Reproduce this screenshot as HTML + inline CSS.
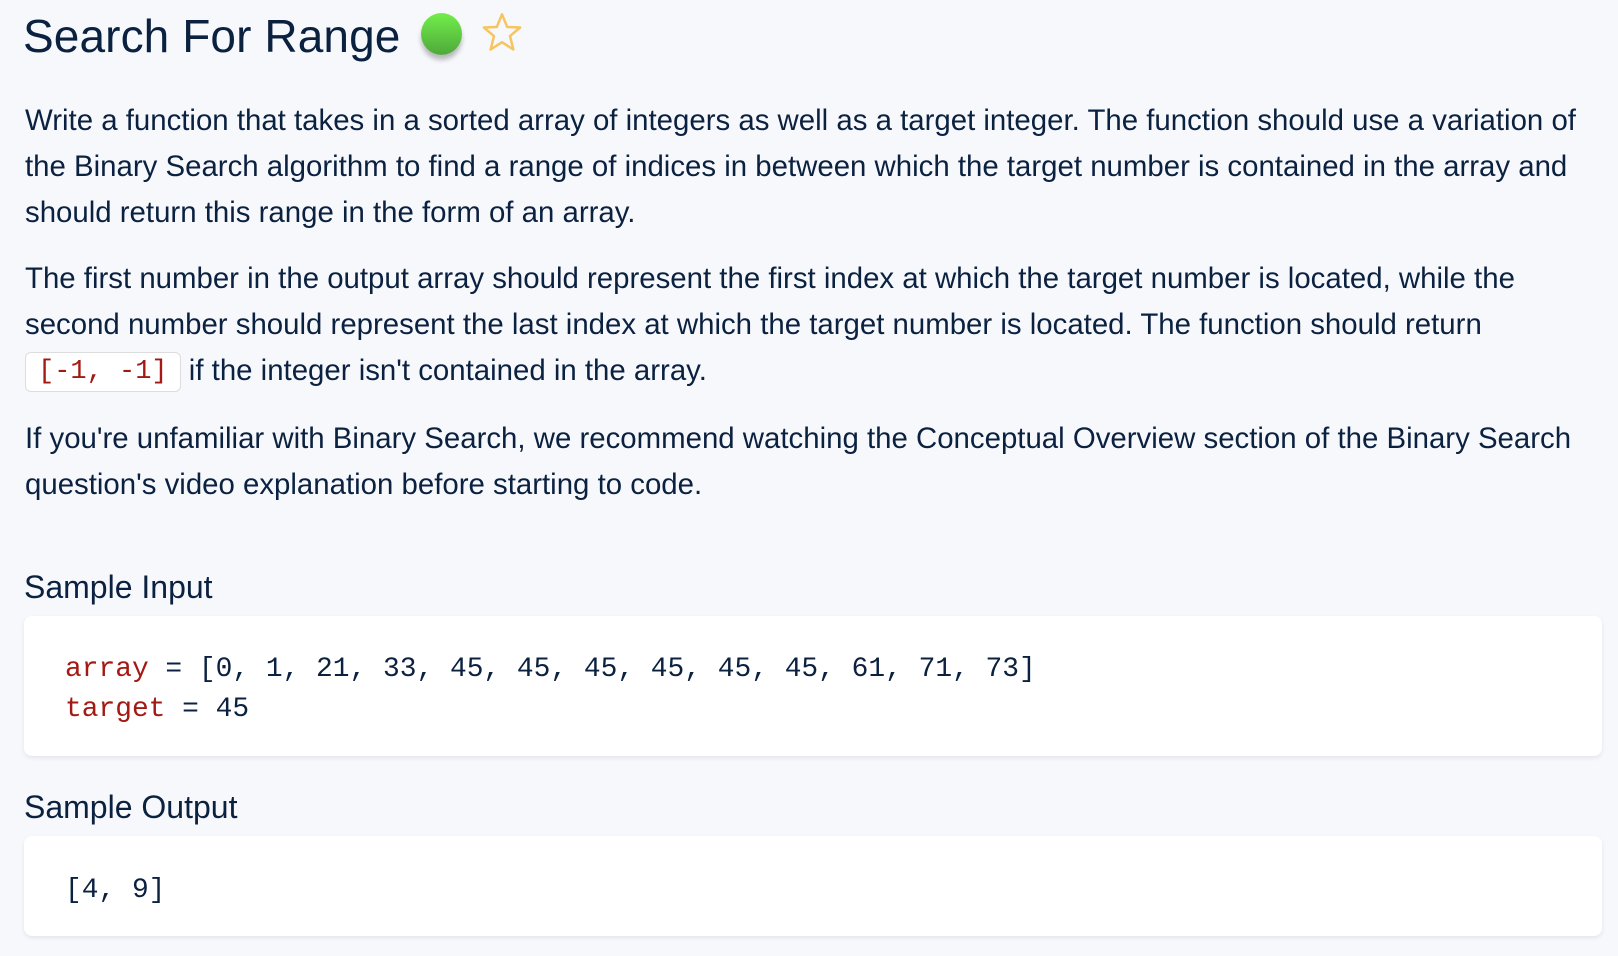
<!DOCTYPE html>
<html><head><meta charset="utf-8"><style>
html,body{margin:0;padding:0;background:#f7f8fc;width:1618px;height:956px;overflow:hidden}
body{font-family:"Liberation Sans",sans-serif;color:#0b2140;position:relative}
.a{position:absolute;white-space:nowrap}
h1{position:absolute;left:23px;top:6px;margin:0;font-size:46px;font-weight:normal;letter-spacing:0.1px;line-height:60px}
.p{position:absolute;left:25px;font-size:29.4px;line-height:46px;white-space:nowrap}
.h{position:absolute;left:24px;font-size:32px}
.box{position:absolute;left:24px;width:1578px;background:#fff;border-radius:8px;box-shadow:0 2px 5px rgba(0,0,40,0.08)}
.code{position:absolute;left:65px;font-family:"Liberation Mono",monospace;font-size:27.9px;line-height:40px;white-space:pre}
.r{color:#a31a14}
.ic{display:inline-block;font-family:"Liberation Mono",monospace;color:#a31a14;background:#fff;border:1px solid #ddd;border-radius:6px;padding:0 12px;line-height:38px;font-size:27px;vertical-align:middle}
</style></head><body>
<h1>Search For Range</h1>
<div class="a" style="left:421px;top:13px;width:41px;height:42px;border-radius:50%;background:linear-gradient(#72ee4a,#4ea93a);box-shadow:0 5px 5px rgba(0,0,0,0.25)"></div>
<svg class="a" style="left:481px;top:11px" width="42" height="44" viewBox="0 0 38 40"><polygon points="19,3 23.7,14.5 35.5,15 26.3,22.8 29.3,35 19,28.3 8.7,35 11.7,22.8 2.5,15 14.3,14.5" fill="none" stroke="#f6c560" stroke-width="2.3" stroke-linejoin="round"/></svg>
<div class="p" style="top:98px">Write a function that takes in a sorted array of integers as well as a target integer. The function should use a variation of<br>the Binary Search algorithm to find a range of indices in between which the target number is contained in the array and<br>should return this range in the form of an array.</div>
<div class="p" style="top:256px">The first number in the output array should represent the first index at which the target number is located, while the<br>second number should represent the last index at which the target number is located. The function should return<br><span class="ic">[-1, -1]</span> if the integer isn't contained in the array.</div>
<div class="p" style="top:416px">If you're unfamiliar with Binary Search, we recommend watching the Conceptual Overview section of the Binary Search<br>question's video explanation before starting to code.</div>
<div class="h" style="top:569px">Sample Input</div>
<div class="box" style="top:616px;height:140px"></div>
<div class="code" style="top:650px"><span class="r">array</span> = [0, 1, 21, 33, 45, 45, 45, 45, 45, 45, 61, 71, 73]
<span class="r">target</span> = 45</div>
<div class="h" style="top:789px">Sample Output</div>
<div class="box" style="top:836px;height:100px"></div>
<div class="code" style="top:871px">[4, 9]</div>
</body></html>
